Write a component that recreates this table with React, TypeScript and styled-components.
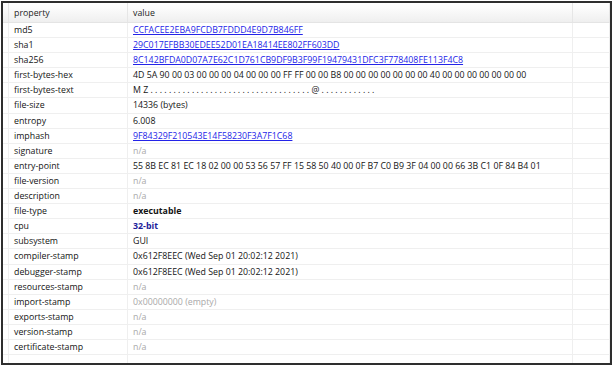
import React from 'react';
import styled, { createGlobalStyle } from 'styled-components';

const GlobalStyle = createGlobalStyle`
  html, body {
    margin: 0;
    padding: 0;
    background: #ffffff;
  }
  body {
    font-family: "Open Sans", "Noto Sans", sans-serif;
  }
`;

const Frame = styled.div`
  box-sizing: border-box;
  width: 611px;
  height: 364px;
  margin: 1px;
  border: 2px solid #2e2e2e;
  background: #ffffff;
  display: flex;
  flex-direction: column;
  overflow: hidden;
`;

const COLUMNS = '6px 119px 445px 1fr';

const HeaderRow = styled.div`
  display: grid;
  grid-template-columns: ${COLUMNS};
  height: 19px;
  background: linear-gradient(#ffffff 0%, #fbfbfb 30%, #efefef 100%);
  border-bottom: 1px solid #e4e4e4;
  flex-shrink: 0;
`;

const HeaderCell = styled.div`
  box-sizing: border-box;
  padding: 4px 0 0 5px;
  font-size: 8.8px;
  color: #1e1e1e;
  border-right: 1px solid #e6e6e6;
  white-space: nowrap;
`;

const Row = styled.div`
  display: grid;
  grid-template-columns: ${COLUMNS};
  height: 15.1px;
  box-sizing: border-box;
  border-bottom: 1px solid #efefef;
  flex-shrink: 0;
`;

const Filler = styled.div`
  display: grid;
  grid-template-columns: ${COLUMNS};
  flex: 1;
`;

const Cell = styled.div`
  box-sizing: border-box;
  padding: 1px 0 0 5px;
  font-size: 8.8px;
  line-height: 13px;
  color: #141414;
  border-right: 1px solid #efefef;
  white-space: nowrap;
  overflow: hidden;
`;

type Tone = 'plain' | 'link' | 'muted' | 'bold' | 'accent';

const Value = styled.span<{ $tone: Tone }>`
  color: ${p =>
    p.$tone === 'link' ? '#2424e8' :
    p.$tone === 'muted' ? '#a9a9a9' :
    p.$tone === 'accent' ? '#1d1d9a' : '#141414'};
  text-decoration: ${p => (p.$tone === 'link' ? 'underline' : 'none')};
  font-weight: ${p => (p.$tone === 'bold' || p.$tone === 'accent' ? 700 : 400)};
`;

const dots = (n: number) => Array(n).fill('.').join(' ');

const rows: { key: string; value: string; tone: Tone }[] = [
  { key: 'md5', value: 'CCFACEE2EBA9FCDB7FDDD4E9D7B846FF', tone: 'link' },
  { key: 'sha1', value: '29C017EFBB30EDEE52D01EA18414EE802FF603DD', tone: 'link' },
  { key: 'sha256', value: '8C142BFDA0D07A7E62C1D761CB9DF9B3F99F19479431DFC3F778408FE113F4C8', tone: 'link' },
  { key: 'first-bytes-hex', value: '4D 5A 90 00 03 00 00 00 04 00 00 00 FF FF 00 00 B8 00 00 00 00 00 00 00 40 00 00 00 00 00 00 00', tone: 'plain' },
  { key: 'first-bytes-text', value: `M Z ${dots(35)} @ ${dots(12)}`, tone: 'plain' },
  { key: 'file-size', value: '14336 (bytes)', tone: 'plain' },
  { key: 'entropy', value: '6.008', tone: 'plain' },
  { key: 'imphash', value: '9F84329F210543E14F58230F3A7F1C68', tone: 'link' },
  { key: 'signature', value: 'n/a', tone: 'muted' },
  { key: 'entry-point', value: '55 8B EC 81 EC 18 02 00 00 53 56 57 FF 15 58 50 40 00 0F B7 C0 B9 3F 04 00 00 66 3B C1 0F 84 B4 01', tone: 'plain' },
  { key: 'file-version', value: 'n/a', tone: 'muted' },
  { key: 'description', value: 'n/a', tone: 'muted' },
  { key: 'file-type', value: 'executable', tone: 'bold' },
  { key: 'cpu', value: '32-bit', tone: 'accent' },
  { key: 'subsystem', value: 'GUI', tone: 'plain' },
  { key: 'compiler-stamp', value: '0x612F8EEC (Wed Sep 01 20:02:12 2021)', tone: 'plain' },
  { key: 'debugger-stamp', value: '0x612F8EEC (Wed Sep 01 20:02:12 2021)', tone: 'plain' },
  { key: 'resources-stamp', value: 'n/a', tone: 'muted' },
  { key: 'import-stamp', value: '0x00000000 (empty)', tone: 'muted' },
  { key: 'exports-stamp', value: 'n/a', tone: 'muted' },
  { key: 'version-stamp', value: 'n/a', tone: 'muted' },
  { key: 'certificate-stamp', value: 'n/a', tone: 'muted' },
];

export default function App() {
  return (
    <>
      <GlobalStyle />
      <Frame>
        <HeaderRow>
          <HeaderCell />
          <HeaderCell>property</HeaderCell>
          <HeaderCell>value</HeaderCell>
          <HeaderCell />
        </HeaderRow>
        {rows.map(r => (
          <Row key={r.key}>
            <Cell />
            <Cell>{r.key}</Cell>
            <Cell>
              <Value $tone={r.tone}>{r.value}</Value>
            </Cell>
            <Cell />
          </Row>
        ))}
        <Filler>
          <Cell />
          <Cell />
          <Cell />
          <Cell />
        </Filler>
      </Frame>
    </>
  );
}
